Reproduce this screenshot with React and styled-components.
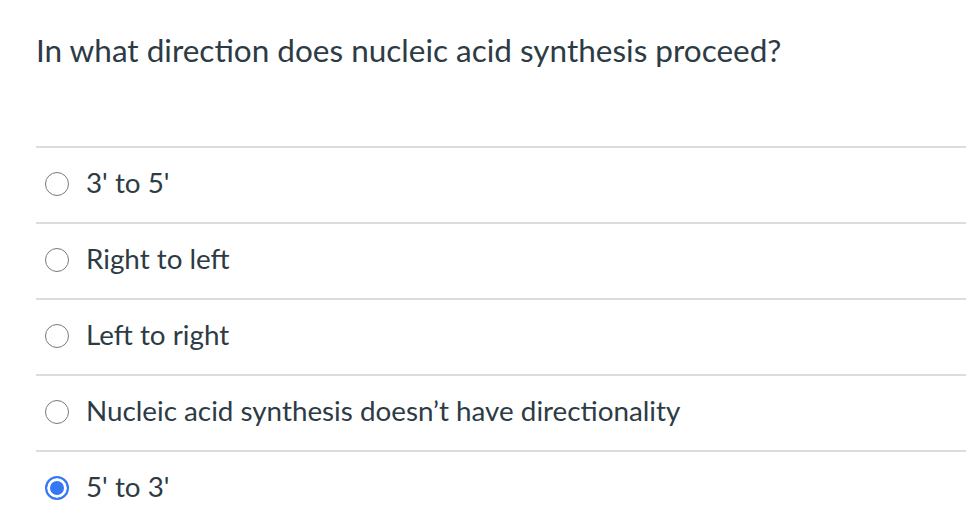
import React from "react";
import styled, { createGlobalStyle } from "styled-components";

const GlobalStyle = createGlobalStyle`
  body {
    margin: 0;
    background: #fff;
    font-family: Lato, "Noto Sans", sans-serif;
    color: #2d3b45;
  }
`;

const Container = styled.div`
  padding: 29px 0 0 36px;
`;

const Question = styled.h1`
  margin: 0;
  font-size: 31.5px;
  font-weight: 400;
  line-height: 42px;
  height: 117px;
`;

const Answers = styled.div`
  display: flex;
  flex-direction: column;
`;

const Row = styled.label`
  display: flex;
  align-items: center;
  gap: 17px;
  height: 74px;
  border-top: 2px solid #dcdcdc;
  padding-left: 9px;
  font-size: 27.8px;
  line-height: 1;
  cursor: pointer;
`;

const Label = styled.span`
  position: relative;
  top: -2px;
`;

const Radio = styled.span`
  box-sizing: border-box;
  width: 24px;
  height: 24px;
  border-radius: 50%;
  flex-shrink: 0;
  margin-top: -2px;
  border: ${(p) => (p.checked ? "2.5px solid #3478f6" : "1.5px solid #7a7a7a")};
  background: ${(p) => (p.checked ? "#3478f6" : "#fff")};
  box-shadow: ${(p) => (p.checked ? "inset 0 0 0 3px #fff" : "none")};
`;

const answers = [
  { text: "3' to 5'" },
  { text: "Right to left" },
  { text: "Left to right" },
  { text: "Nucleic acid synthesis doesn\u2019t have directionality" },
  { text: "5' to 3'", checked: true },
];

export default function App() {
  return (
    <>
      <GlobalStyle />
      <Container>
        <Question>In what direction does nucleic acid synthesis proceed?</Question>
        <Answers>
          {answers.map((a) => (
            <Row key={a.text}>
              <Radio checked={a.checked} />
              <Label>{a.text}</Label>
            </Row>
          ))}
        </Answers>
      </Container>
    </>
  );
}
